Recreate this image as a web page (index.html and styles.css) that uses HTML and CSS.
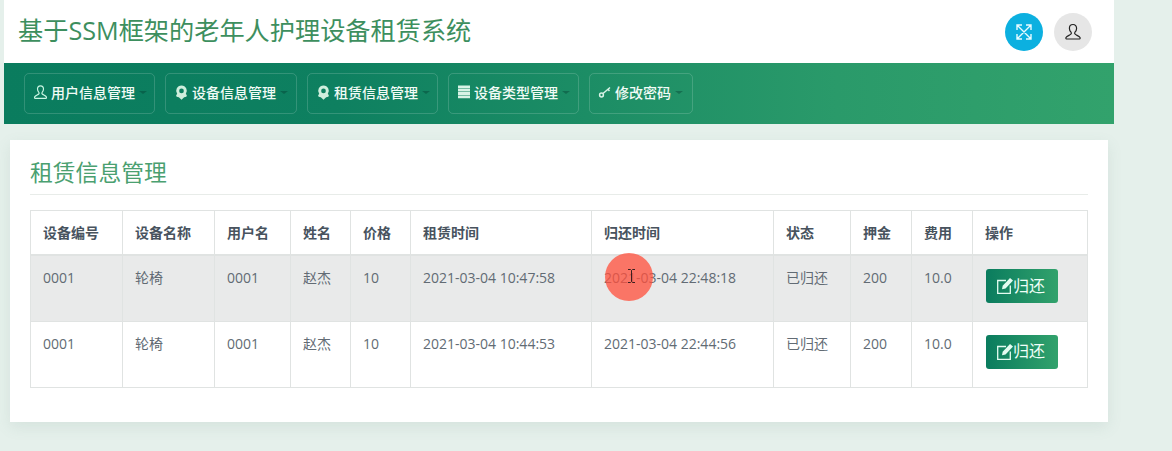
FILE: index.html
```html
<!DOCTYPE html>
<html lang="zh">
    <head>
        <meta charset="utf-8">
        <title>基于SSM框架的老年人护理设备租赁系统</title>
        <link rel="stylesheet" href="styles.css">
    </head>
    <body>
        <div class="wrap">
            <div class="topbar">
                <h1 class="logo">基于SSM框架的老年人护理设备租赁系统</h1>
                <div class="tools">
                    <a class="round blue">
                        <svg width="18" height="18" viewBox="0 0 18 18" fill="none" stroke="#e8fbff" stroke-width="1.4"><path d="M2 2l14 14M16 2L2 16M2 7V2h5M11 2h5v5M16 11v5h-5M7 16H2v-5"/></svg>
                    </a>
                    <a class="round grey">
                        <svg width="18" height="18" viewBox="0 0 18 18" fill="none" stroke="#222" stroke-width="1.2"><path d="M9 1.5c-2.3 0-3.6 1.700-3.600 3.800 0 1.600.7 3 1.600 3.900.4.500.4 1.500-.1 2-1 1-4 1.800-4.900 3.300-.3.600-.2 1.500.5 1.500h13c.7 0 .8-.9.500-1.500-.9-1.500-3.900-2.300-4.900-3.300-.5-.5-.5-1.500-.1-2 .9-.9 1.600-2.300 1.600-3.900 0-2.100-1.300-3.800-3.600-3.800z"/></svg>
                    </a>
                </div>
            </div>
            <div class="nav">
                <a class="nav-btn">
                    <svg class="ico" width="15" height="15" viewBox="0 0 18 18" fill="none" stroke="#c9f5e3" stroke-width="1.400"><path d="M9 1c-2.300 0-3.600 1.800-3.600 3.900 0 1.600.7 3 1.600 3.900.4.500.4 1.500-.1 2-1 1-4 1.900-4.900 3.400-.3.600-.2 1.800.5 1.800h13c.7 0 .8-1.200.5-1.800-.9-1.500-3.900-2.400-4.900-3.400-.5-.5-.5-1.500-.1-2 .9-.9 1.600-2.300 1.600-3.900C12.600 2.800 11.300 1 9 1z"/></svg>
                    <span>用户信息管理</span><i class="caret"></i>
                </a>
                <a class="nav-btn wide">
                    <svg class="ico" width="15" height="15" viewBox="0 0 14 14"><path fill="#cfeedd" fill-rule="evenodd" d="M7 .5a5 5 0 0 1 4 8c.6.400 1 .9 1 1.500 0 .7-.9 1.300-2.500 1.500L7 13.800l-2.500-2.300C2.900 11.300 2 10.700 2 10c0-.6.400-1.100 1-1.500a5 5 0 0 1 4-8zm0 2.800a2.200 2.200 0 1 0 0 4.400 2.200 2.200 0 0 0 0-4.400z"/></svg>
                    <span>设备信息管理</span><i class="caret"></i>
                </a>
                <a class="nav-btn">
                    <svg class="ico" width="15" height="15" viewBox="0 0 14 14"><path fill="#cfeedd" fill-rule="evenodd" d="M7 .5a5 5 0 0 1 4 8c.6.400 1 .9 1 1.500 0 .7-.9 1.300-2.500 1.500L7 13.800l-2.500-2.300C2.900 11.300 2 10.700 2 10c0-.6.400-1.100 1-1.500a5 5 0 0 1 4-8zm0 2.800a2.200 2.200 0 1 0 0 4.400 2.200 2.200 0 0 0 0-4.400z"/></svg>
                    <span>租赁信息管理</span><i class="caret"></i>
                </a>
                <a class="nav-btn">
                    <svg class="ico" width="14" height="14" viewBox="0 0 14 14" fill="#d8f3e6"><path d="M1 .5h12v2.800H1zM1 3.800h12v2.800H1zM1 7.100h12v2.800H1zM1 10.400h12v2.800H1z"/></svg>
                    <span>设备类型管理</span><i class="caret"></i>
                </a>
                <a class="nav-btn short">
                    <svg class="ico" width="14" height="14" viewBox="0 0 14 14" fill="none" stroke="#d8f3e6" stroke-width="1.500"><circle cx="3.500" cy="10" r="1.900"/><path d="M5 8.500l7-6M10 4.500l1.500 1.400"/></svg>
                    <span>修改密码</span><i class="caret"></i>
                </a>
            </div>
            <div class="card">
                <h2 class="card-title">租赁信息管理</h2>
                <table class="list">
                    <colgroup>
                        <col class="c1"><col class="c2"><col class="c3"><col class="c4"><col class="c5">
                        <col class="c6"><col class="c7"><col class="c8"><col class="c9"><col class="c10"><col class="c11">
                    </colgroup>
                    <thead>
                        <tr>
                            <th>设备编号</th><th>设备名称</th><th>用户名</th><th>姓名</th><th>价格</th>
                            <th>租赁时间</th><th>归还时间</th><th>状态</th><th>押金</th><th>费用</th><th>操作</th>
                        </tr>
                    </thead>
                    <tbody>
                        <tr class="hover">
                            <td>0001</td><td>轮椅</td><td>0001</td><td>赵杰</td><td>10</td>
                            <td>2021-03-04 10:47:58</td><td>2021-03-04 22:48:18</td><td>已归还</td><td>200</td><td>10.0</td>
                            <td>
                                <a class="btn">
                                    <svg width="16" height="16" viewBox="0 0 16 16" fill="none" stroke="#e4fbf1" stroke-width="1.300"><path d="M9 2.500H.7v12.800h12.600V7.500"/><path fill="#e4fbf1" stroke="none" d="M13 0l3 2.600-7.500 7.900-3.500.8.700-3.500z"/></svg>归还
                                </a>
                            </td>
                        </tr>
                        <tr>
                            <td>0001</td><td>轮椅</td><td>0001</td><td>赵杰</td><td>10</td>
                            <td>2021-03-04 10:44:53</td><td>2021-03-04 22:44:56</td><td>已归还</td><td>200</td><td>10.0</td>
                            <td>
                                <a class="btn">
                                    <svg width="16" height="16" viewBox="0 0 16 16" fill="none" stroke="#e4fbf1" stroke-width="1.300"><path d="M9 2.500H.7v12.800h12.600V7.500"/><path fill="#e4fbf1" stroke="none" d="M13 0l3 2.600-7.500 7.900-3.500.8.700-3.500z"/></svg>归还
                                </a>
                            </td>
                        </tr>
                    </tbody>
                </table>
            </div>
        </div>
        <div class="click-dot"></div>
        <svg class="ibeam" width="7" height="14" viewBox="0 0 7 14" fill="none" stroke="#3a2020" stroke-width="1"><path d="M0 .5h2.500L3.500 1.500 4.500.5H7M3.500 1.500v11M0 13.500h2.500l1-1 1 1H7"/></svg>
    </body>
</html>
```

FILE: styles.css
```css
*{
    margin: 0;
    padding: 0;
    box-sizing: border-box;
}
html,body{
    height: 100%;
    overflow: hidden;
}
body{
    background: #e5f0eb;
    font-family: "Open Sans", "Noto Sans CJK SC", sans-serif;
    font-size: 14px;
    color: #626b74;
    position: relative;
}
.wrap{
    width: 1110px;
    margin-left: 4px;
}
.topbar{
    height: 63px;
    background: #fff;
    display: flex;
    justify-content: space-between;
    align-items: center;
    padding: 0 22px 0 14px;
}
.logo{
    font-size: 25.200px;
    font-weight: 400;
    line-height: 30px;
    margin-bottom: 4px;
    color: #3d8f5e;
}
.tools{
    display: flex;
    gap: 11px;
}
.round{
    width: 38px;
    height: 38px;
    border-radius: 50%;
    display: flex;
    align-items: center;
    justify-content: center;
}
.blue{
    background: #0cb0e0;
}
.grey{
    background: #e6e6e6;
}
.nav{
    height: 61px;
    background: linear-gradient(to right, #0a7c5e, #0e8060 30%, #2a9a6a 75%, #32a26c);
    display: flex;
    gap: 10px;
    padding: 10px 20px;
}
.nav-btn{
    width: 131px;
    height: 41px;
    border: 1px solid rgba(255,255,255,.16);
    border-radius: 5px;
    padding: 0 0 3px 8px;
    display: flex;
    align-items: center;
    color: #f1fbf6;
    font-weight: 500;
    font-size: 14px;
}
.nav-btn.wide{
    width: 132px;
}
.nav-btn.short{
    width: 104px;
}
.ico{
    margin-right: 3px;
}
.caret{
    width: 0;
    height: 0;
    margin-left: 4px;
    border-top: 3px solid rgba(0,50,40,.35);
    border-left: 4px solid transparent;
    border-right: 4px solid transparent;
}
.card{
    width: 1098px;
    height: 282px;
    margin: 16px 0 0 6px;
    background: #fff;
    padding: 20px;
    box-shadow: 0 5px 14px rgba(100,130,120,.12);
}
.card-title{
    font-size: 22.800px;
    font-weight: 400;
    line-height: 26px;
    height: 35px;
    color: #4aa070;
    border-bottom: 1px solid #e8ece9;
    margin-bottom: 15px;
}
.list{
    width: 1058px;
    table-layout: fixed;
    border-collapse: collapse;
}
.c1,.c2{width: 92px;}
.c3{width: 76px;}
.c4,.c5{width: 60px;}
.c6{width: 181px;}
.c7{width: 182px;}
.c8{width: 77px;}
.c9,.c10{width: 61px;}
.c11{width: 115px;}
.list th,.list td{
    border: 1px solid #e0e3e2;
    padding: 11px 12px;
    text-align: left;
    vertical-align: top;
    white-space: nowrap;
}
.list th{
    height: 44px;
    padding-top: 12px;
    font-weight: 600;
    font-size: 14px;
    line-height: 20px;
    color: #48535e;
    border-bottom-width: 2px;
}
.list td{
    height: 66px;
    line-height: 21px;
    font-size: 14px;
}
.hover td{
    background: #e9eaea;
}
.btn{
    display: inline-flex;
    align-items: center;
    height: 34px;
    width: 72px;
    padding-left: 11px;
    margin: 2px 0 0 1px;
    border-radius: 3px;
    background: linear-gradient(to right, #0a7c5e, #32a26c);
    color: #f0fff8;
    font-size: 16px;
}
.click-dot{
    position: absolute;
    left: 605px;
    top: 253px;
    width: 48px;
    height: 48px;
    border-radius: 50%;
    background: rgba(255,80,60,.76);
}
.ibeam{
    position: absolute;
    left: 628px;
    top: 269px;
}
```
